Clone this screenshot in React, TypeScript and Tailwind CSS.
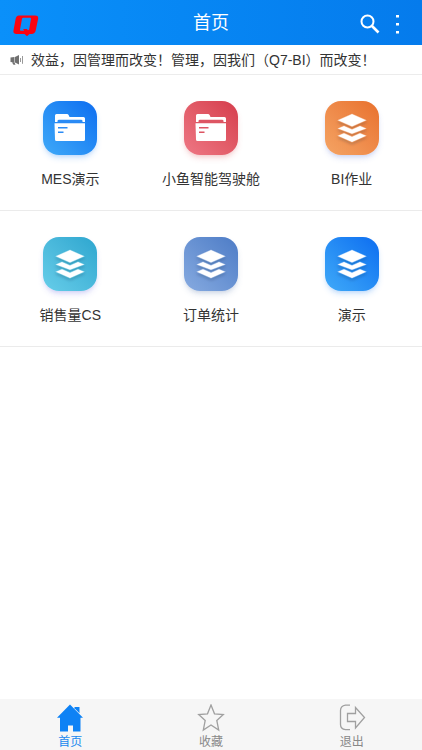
import { useId, useState } from "react";

type Glyph = "folder" | "layers";

const apps: { name: string; glyph: Glyph; tile: string; accent: string }[] = [
    { name: "MES演示", glyph: "folder", tile: "from-[#3fa9f8] to-[#0e6df0] shadow-[#1a7cf0]/20", accent: "#2b8bf5" },
    { name: "小鱼智能驾驶舱", glyph: "folder", tile: "from-[#ee7784] to-[#d53c4c] shadow-[#d94a50]/20", accent: "#dd5563" },
    { name: "BI作业", glyph: "layers", tile: "from-[#f4a464] to-[#e8702c] shadow-[#4a6ad8]/20", accent: "#ec8241" },
    { name: "销售量CS", glyph: "layers", tile: "from-[#66cde9] to-[#2ca6cf] shadow-[#5a5ae0]/20", accent: "#45b6d9" },
    { name: "订单统计", glyph: "layers", tile: "from-[#86aae0] to-[#4d7cc6] shadow-[#4d6ca6]/20", accent: "#668fd1" },
    { name: "演示", glyph: "layers", tile: "from-[#3fa9f8] to-[#0e6df0] shadow-[#1a7cf0]/20", accent: "#2b8bf5" },
];

const tabs = [
    { name: "首页", Icon: HomeIcon },
    { name: "收藏", Icon: StarIcon },
    { name: "退出", Icon: ExitIcon },
];

function Logo() {
    return (
        <svg viewBox="0 0 26 22" className="h-[22px] w-[26px]" aria-hidden="true">
            <path
                fill="#fb0310"
                fillRule="evenodd"
                d="M6 .5H22Q25.800 .5 25.100 4L22.700 15.500Q22 18.700 18.500 19H16.500L14 21.200L11.500 19H3.500Q-.2 19 .5 15.500L2.600 4Q3.200 .5 6 .5ZM10.200 2.800Q9.200 2.800 9 3.800L7 14.500Q6.800 15.800 7.900 15.800H11L10.200 14H14L14.800 15.300Q16 15.300 16.200 14.300L18 3.800Q18.200 2.800 17.200 2.800Z"
            />
        </svg>
    );
}

function SpeakerIcon() {
    return (
        <svg viewBox="0 0 14 12" className="h-3 w-3.5" fill="#707070" aria-hidden="true">
            <path d="M.5 3.500L4.500 3V8.500L.5 8ZM5 3L9 1V10.500L5 8.500ZM2 8.500H4.500L5.500 10.800H3.500Z" />
            <path d="M10.500 4V8M12.500 2V9.800" fill="none" stroke="#999" strokeWidth="1" />
        </svg>
    );
}

function FolderGlyph({ accent }: { accent: string }) {
    return (
        <svg viewBox="0 0 54 54" className="size-full" aria-hidden="true">
            <path fill="#fff" d="M12 21V14.500Q12 13 13.500 13H24Q25.200 13 25.600 14L26.500 16H40.500Q42 16 42 17.500V21Z" />
            <path fill={accent} d="M14.500 21V20Q14.500 18.700 16 18.700H38Q39.500 18.700 39.500 20V21Z" />
            <path stroke={accent} strokeWidth="1" d="M11.500 21.700H42.500" />
            <path fill="#fff" d="M11.500 22.200H42V38.500Q42 40 40.500 40H13.500Q12 40 12 38.500Z" />
            <path stroke={accent} strokeWidth="1.500" d="M15 26.700H24.500M15 31.200H20.500" />
        </svg>
    );
}

function LayersGlyph({ accent }: { accent: string }) {
    const id = useId();
    return (
        <svg viewBox="0 0 54 54" className="size-full" aria-hidden="true">
            <defs>
                <filter id={id} x="-20%" y="-20%" width="140%" height="150%">
                    <feDropShadow dx="0" dy="2" stdDeviation="1.500" floodColor="#123" floodOpacity=".22" />
                </filter>
            </defs>
            <g fill="#fff" stroke={accent} strokeWidth=".3" filter={`url(#${id})`}>
                <path d="M12.300 19.300L27 12.800L41.700 19.300L27 25.700Z" />
                <path d="M12.300 27.500L19 24.700L27 28.300L35 24.700L41.700 27.500L27 33Z" />
                <path d="M12.300 34.800L19 32L27 35.600L35 32L41.700 34.800L27 41.300Z" />
            </g>
        </svg>
    );
}

function HomeIcon() {
    return (
        <svg viewBox="0 0 28 28" className="size-7" fill="#0e82f5" aria-hidden="true">
            <path d="M14 .5L27 13.700H24.500V27.500H17V21.500H12V27.500H4V13.700H1Z" />
            <path d="M18.500 3H23.500V9.200L18.500 4.200Z" />
        </svg>
    );
}

function StarIcon() {
    return (
        <svg viewBox="0 0 28 28" className="size-7" fill="none" stroke="#a0a0a0" strokeWidth="1.300" aria-hidden="true">
            <path d="M14 1L17.500 9.800L26.300 10.500L19.800 16.500L21.700 26L14 21L6.300 26L8.200 16.500L1.700 10.500L10.500 9.800Z" />
        </svg>
    );
}

function ExitIcon() {
    return (
        <svg viewBox="0 0 28 28" className="size-7" fill="none" stroke="#a0a0a0" strokeWidth="1.300" aria-hidden="true">
            <path d="M12 1.200H7.500Q2.500 2 2.500 6.500V20.500Q2.500 25 7.500 25.700H12" />
            <path d="M9.500 9.500H17.500V3.500L26.500 13.500L17.500 24V17.500H9.500Z" />
        </svg>
    );
}

export default function App() {
    const [active, setActive] = useState("首页");

    return (
        <div
            lang="zh-CN"
            className="flex min-h-screen flex-col bg-white font-['Liberation_Sans','Noto_Sans_CJK_SC',sans-serif] text-sm text-[#333]"
        >
            <header className="grid h-[45px] grid-cols-[1fr_auto_1fr] items-center bg-linear-to-r from-[#0a90fa] to-[#057bec] text-white">
                <div className="pt-1.5 pl-[13px]">
                    <Logo />
                </div>
                <h1 className="text-lg leading-6">首页</h1>
                <div className="flex items-center justify-end gap-3 pt-0.5 pr-5">
                    <button type="button" aria-label="搜索" className="cursor-pointer">
                        <svg viewBox="0 0 20 20" className="size-5" fill="none" stroke="currentColor" aria-hidden="true">
                            <circle cx="7.500" cy="7.500" r="6" strokeWidth="2" />
                            <path d="M12 12L18.500 18.500" strokeWidth="2.600" />
                        </svg>
                    </button>
                    <button type="button" aria-label="更多" className="cursor-pointer">
                        <svg viewBox="0 0 10 20" className="h-5 w-2.5" fill="currentColor" aria-hidden="true">
                            <path d="M4 1H7V3.500H4ZM4 9H7V11.500H4ZM4 17H7V19.500H4Z" />
                        </svg>
                    </button>
                </div>
            </header>

            <div className="flex h-[30px] items-center gap-[7px] border-b border-[#ececec] pl-2.5 whitespace-nowrap">
                <SpeakerIcon />
                <p className="leading-5">效益，因管理而改变！管理，因我们（Q7-BI）而改变！</p>
            </div>

            <main className="grid flex-1 auto-rows-min grid-cols-3">
                {apps.map((app) => (
                    <a
                        key={app.name}
                        href="#"
                        className="flex flex-col items-center gap-3.5 border-b border-[#ebebeb] pt-[26px] pb-[21px]"
                    >
                        <span className={`size-[54px] rounded-2xl bg-linear-to-tr shadow-md ${app.tile}`}>
                            {app.glyph === "folder" ? <FolderGlyph accent={app.accent} /> : <LayersGlyph accent={app.accent} />}
                        </span>
                        <span className="leading-5">{app.name}</span>
                    </a>
                ))}
            </main>

            <nav className="grid h-[51px] grid-cols-3 bg-[#f6f6f6]">
                {tabs.map(({ name, Icon }) => (
                    <button
                        key={name}
                        type="button"
                        onClick={() => setActive(name)}
                        className={`flex cursor-pointer flex-col items-center pt-[5px] text-xs ${active === name ? "text-[#2189ee]" : "text-[#888]"}`}
                    >
                        <Icon />
                        <span className="leading-5">{name}</span>
                    </button>
                ))}
            </nav>
        </div>
    );
}
